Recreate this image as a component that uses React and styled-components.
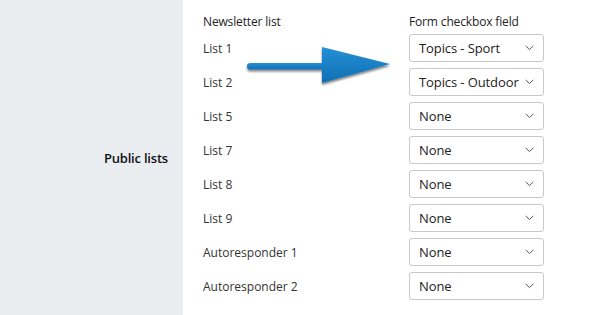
import React from 'react';
import styled, {createGlobalStyle} from 'styled-components';

const GlobalStyle = createGlobalStyle`
  html, body {
    margin: 0;
    padding: 0;
    background: #fff;
  }
  body {
    font-family: "Open Sans", "Noto Sans", sans-serif;
    -webkit-font-smoothing: antialiased;
  }
`;

const Page = styled.div`
  position: relative;
  display: grid;
  grid-template-columns: 183px 1fr;
  width: 600px;
  height: 315px;
  overflow: hidden;
`;

const Side = styled.div`
  display: flex;
  align-items: center;
  justify-content: flex-end;
  padding-right: 15px;
  background: #eaedf0;
  font-size: 13px;
  font-weight: 600;
  color: #111;
  letter-spacing: -0.2px;
`;

const Content = styled.div`
  display: flex;
  flex-direction: column;
  gap: 6px;
  padding: 12px 0 0 20px;
`;

const Row = styled.div`
  display: grid;
  grid-template-columns: 206px 135px;
  align-items: center;
  height: ${props => props.head ? '18px' : '28px'};
  margin-bottom: ${props => props.head ? '-2px' : '0'};
`;

const Label = styled.span`
  font-size: 12px;
  color: ${props => props.head ? '#1e1e1e' : '#333'};
  letter-spacing: ${props => props.head ? '-0.15px' : '0'};
`;

const Select = styled.div`
  display: flex;
  align-items: center;
  justify-content: space-between;
  box-sizing: border-box;
  height: 28px;
  padding: 0 9px 0 9px;
  border: 1px solid #c9c9c9;
  border-radius: 3px;
  background: #fff;
  font-size: 13px;
  color: #222;
  letter-spacing: -0.1px;
  white-space: nowrap;
`;

const Chevron = () => (
  <svg width="9" height="6" viewBox="0 0 9 6" fill="none">
    <path d="M1 1.2l3.5 3.4L8 1.2" stroke="#555" strokeWidth="1" strokeLinecap="round" strokeLinejoin="round" />
  </svg>
);

const Arrow = styled.svg`
  position: absolute;
  left: 240px;
  top: 40px;
`;

const rows = [
  ['List 1', 'Topics - Sport'],
  ['List 2', 'Topics - Outdoor'],
  ['List 5', 'None'],
  ['List 7', 'None'],
  ['List 8', 'None'],
  ['List 9', 'None'],
  ['Autoresponder 1', 'None'],
  ['Autoresponder 2', 'None'],
];

export default function App() {
  return (
    <Page>
      <GlobalStyle />
      <Side>Public lists</Side>
      <Content>
        <Row head>
          <Label head>Newsletter list</Label>
          <Label head>Form checkbox field</Label>
        </Row>
        {rows.map(([name, value]) => (
          <Row key={name}>
            <Label>{name}</Label>
            <Select>
              <span>{value}</span>
              <Chevron />
            </Select>
          </Row>
        ))}
      </Content>
      <Arrow width="160" height="55" viewBox="0 0 160 55">
        <defs>
          <linearGradient id="ab" x1="0" y1="0" x2="0" y2="1">
            <stop offset="0" stopColor="#2590d6" />
            <stop offset="1" stopColor="#0f6fb3" />
          </linearGradient>
          <filter id="sh" x="-10%" y="-30%" width="130%" height="170%">
            <feDropShadow dx="0" dy="2" stdDeviation="1.3" floodColor="#000" floodOpacity="0.5" />
          </filter>
        </defs>
        <g filter="url(#sh)">
          <rect x="7" y="23" width="80" height="6.5" rx="3.2" fill="url(#ab)" />
          <path d="M82 7 L150 24 L82 43 Z" fill="url(#ab)" />
        </g>
      </Arrow>
    </Page>
  );
}
